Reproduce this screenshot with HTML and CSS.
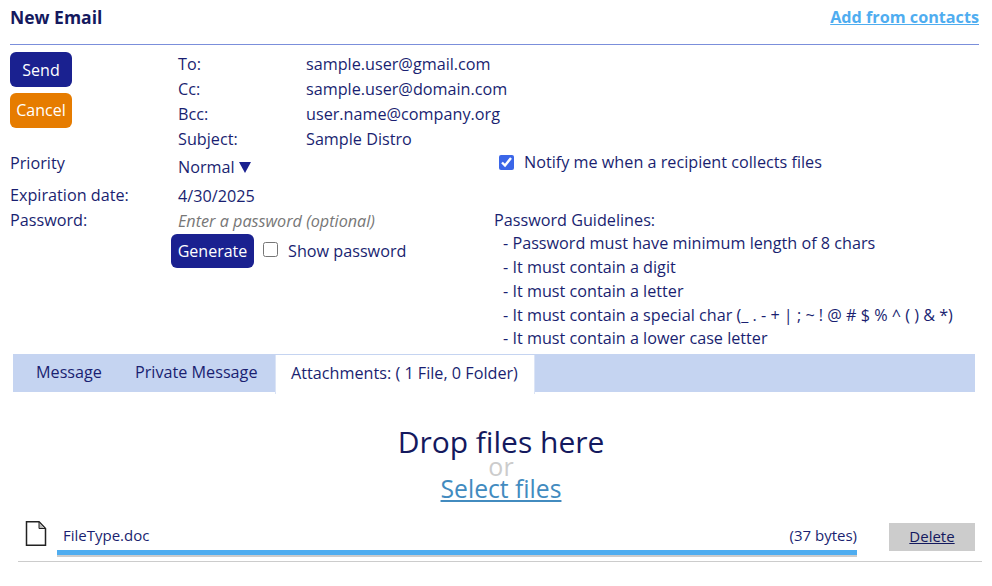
FILE: index.html
```html
<!DOCTYPE html>
<html lang="en">

<head>
    <meta charset="UTF-8">
    <meta name="viewport" content="width=device-width, initial-scale=1.0">
    <link rel="stylesheet" href="styles.css">
    <title>New Email</title>
</head>

<body>
    <div class="header">
        <div class="title">New Email</div>
        <a class="contacts" href="#">Add from contacts</a>
    </div>

    <div class="top">
        <div class="actions">
            <button class="btn send">Send</button>
            <button class="btn cancel">Cancel</button>
        </div>
        <div class="recipients">
            <span>To:</span><span>sample.user@gmail.com</span>
            <span>Cc:</span><span>sample.user@domain.com</span>
            <span>Bcc:</span><span>user.name@company.org</span>
            <span>Subject:</span><span>Sample Distro</span>
        </div>
    </div>

    <div class="priority">
        <div class="label">Priority</div>
        <div class="select">Normal<span class="arrow"></span></div>
        <label class="notify"><input type="checkbox" checked>Notify me when a recipient collects files</label>
    </div>

    <div class="security">
        <div class="fields">
            <div class="expiry">
                <div class="label">Expiration date:</div>
                <div class="value">4/30/2025</div>
            </div>
            <div class="password">
                <div class="label">Password:</div>
                <div class="value hint">Enter a password (optional)</div>
            </div>
            <div class="generate">
                <button class="btn gen">Generate</button>
                <label class="show"><input type="checkbox">Show password</label>
            </div>
        </div>
        <div class="guidelines">
            <div>Password Guidelines:</div>
            <ul>
                <li>- Password must have minimum length of 8 chars</li>
                <li>- It must contain a digit</li>
                <li>- It must contain a letter</li>
                <li>- It must contain a special char (_ . - + | ; ~ ! @ # $ % ^ ( ) &amp; *)</li>
                <li>- It must contain a lower case letter</li>
            </ul>
        </div>
    </div>

    <div class="tabs">
        <div class="tab">Message</div>
        <div class="tab">Private Message</div>
        <div class="tab active">Attachments: ( 1 File, 0 Folder)</div>
    </div>

    <div class="drop">
        <div class="drop-title">Drop files here</div>
        <div class="drop-or">or</div>
        <a class="drop-select" href="#">Select files</a>
    </div>

    <div class="file">
        <svg class="file-icon" width="22" height="26" viewBox="0 0 22 26">
            <path d="M1.5 0.8H14L20.5 7.5V24.2H1.5Z" fill="#fff" stroke="#222" stroke-width="1.5" />
            <path d="M14 0.8V7.5H20.5Z" fill="#bbb" stroke="#222" stroke-width="1" />
        </svg>
        <div class="file-main">
            <div class="file-info">
                <span>FileType.doc</span>
                <span>(37 bytes)</span>
            </div>
            <div class="progress"></div>
        </div>
        <a class="delete" href="#">Delete</a>
    </div>
</body>

</html>
```

FILE: styles.css
```css
* {
    margin: 0;
    padding: 0;
    box-sizing: border-box;
}

body {
    width: 992px;
    height: 586px;
    overflow: hidden;
    background: #fff;
    color: #1a1f71;
    font-family: "Open Sans", sans-serif;
    font-size: 16.2px;
    line-height: 25px;
}

.header {
    display: flex;
    justify-content: space-between;
    align-items: center;
    height: 45px;
    margin: 0 13px 0 10px;
    padding-bottom: 10px;
    border-bottom: 1px solid #7b8fdb;
}

.title {
    font-size: 17.5px;
    font-weight: 700;
    color: #14195e;
}

.contacts {
    font-weight: 700;
    color: #4fadf0;
}

.top {
    display: flex;
    height: 106px;
    margin-left: 10px;
    padding-top: 7px;
}

.actions {
    display: flex;
    flex-direction: column;
    align-items: flex-start;
    gap: 6px;
    width: 168px;
}

.btn {
    border: none;
    border-radius: 6px;
    color: #fff;
    font-family: inherit;
    font-size: 16px;
}

.send,
.cancel {
    width: 62px;
    height: 35px;
}

.send,
.gen {
    background: #1a2190;
}

.cancel {
    padding-bottom: 1px;
    background: #e67c00;
}

.recipients {
    display: grid;
    grid-template-columns: 128px 1fr;
    grid-auto-rows: 25px;
    align-content: start;
}

.priority {
    display: flex;
    align-items: flex-start;
    height: 32px;
    margin-left: 10px;
}

.label {
    width: 168px;
}

.select {
    display: flex;
    align-items: center;
    width: 316px;
    padding-top: 4px;
}

.arrow {
    width: 0;
    height: 0;
    margin-left: 4px;
    border-left: 6px solid transparent;
    border-right: 6px solid transparent;
    border-top: 11px solid #1a2190;
}

.notify {
    display: flex;
    align-items: center;
    margin: -1px 0 0 5px;
}

.notify input {
    width: 15px;
    height: 15px;
    margin-right: 10px;
    accent-color: #3b66e8;
}

.security {
    display: flex;
    height: 171px;
    margin-left: 10px;
}

.fields {
    width: 484px;
}

.expiry,
.password {
    display: flex;
    height: 25px;
}

.value {
    padding-top: 1px;
}

.hint {
    color: #777;
    font-style: italic;
}

.generate {
    display: flex;
    align-items: flex-start;
    margin: 1px 0 0 161px;
}

.gen {
    width: 83px;
    height: 34px;
}

.show {
    display: flex;
    align-items: center;
    height: 34px;
    margin-left: 9px;
}

.show input {
    width: 15px;
    height: 15px;
    margin: -3px 10px 0 0;
}

.guidelines {
    padding-top: 25.5px;
    line-height: 23.75px;
}

.guidelines ul {
    list-style: none;
    padding-left: 9px;
}

.tabs {
    display: flex;
    height: 38px;
    margin: 0 17px 0 13px;
    padding-left: 6.5px;
    background: #c5d4f1;
}

.tab {
    padding: 6px 16.5px 0;
    white-space: nowrap;
}

.tab.active {
    height: 39px;
    margin: 1px 0 0 0.5px;
    padding: 6px 16px 0 15.5px;
    border-left: 1px solid #dbe4f6;
    border-right: 1px solid #dbe4f6;
    background: #fff;
}

.drop {
    display: flex;
    flex-direction: column;
    align-items: center;
    padding: 36px 0 0 10px;
}

.drop-title {
    font-size: 30px;
    line-height: 28px;
    color: #14195e;
}

.drop-or {
    margin-top: 1px;
    font-size: 25px;
    line-height: 18px;
    color: #ccc;
}

.drop-select {
    font-size: 24.7px;
    line-height: 28px;
    color: #428bbf;
}

.file {
    display: flex;
    align-items: flex-start;
    height: 43px;
    margin: 16px 10px 0 18px;
    border-bottom: 1px solid #ccc;
}

.file-icon {
    margin: 2px 0 0 7px;
}

.file-main {
    width: 800px;
    margin: 5px 0 0 10px;
}

.file-info {
    display: flex;
    justify-content: space-between;
    padding-left: 6px;
    font-size: 15px;
    line-height: 22px;
}

.progress {
    height: 7px;
    margin-top: 4px;
    background: #4fadf0;
    border-bottom: 2px solid #ccc;
}

.delete {
    width: 86px;
    height: 28px;
    margin: 4px 0 0 32px;
    background: #ccc;
    color: #14195e;
    font-size: 15px;
    line-height: 26px;
    text-align: center;
}
```
